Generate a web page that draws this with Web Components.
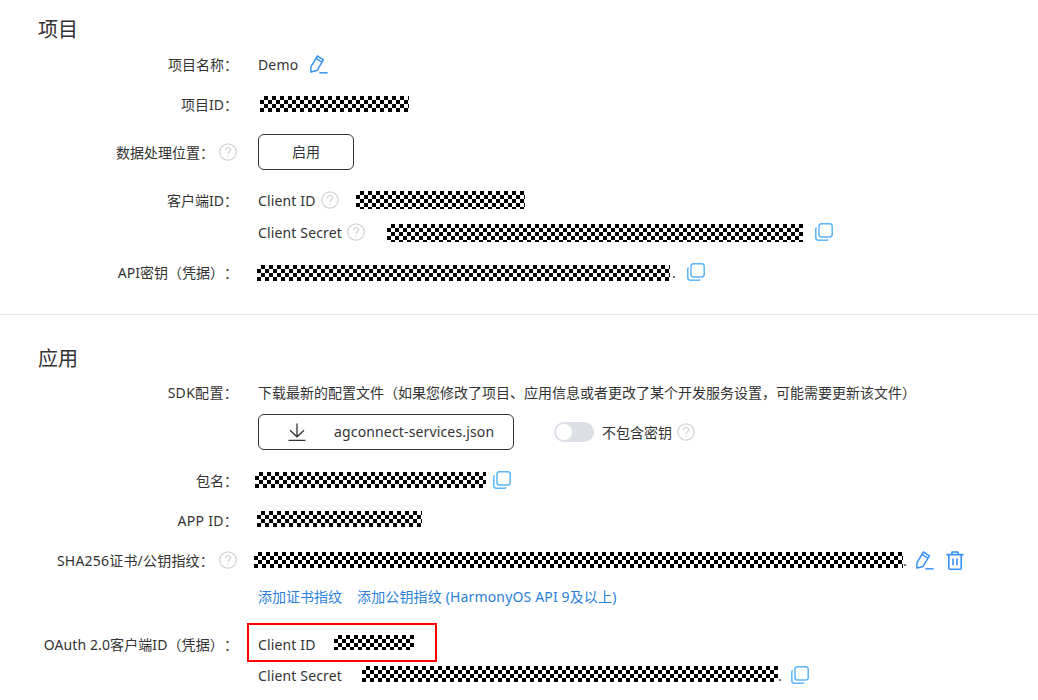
<!DOCTYPE html>
<html lang="zh">
<head>
<meta charset="utf-8">
<title>项目设置</title>
<style>
  html, body { margin: 0; height: 700px; overflow: hidden; background: #fff; }
  body { font: 14px/24px "Noto Sans", "Noto Sans CJK SC", sans-serif; color: #333; text-spacing-trim: space-all; }
</style>
</head>
<body>
<ag-section title="项目" style="--top:15px;--after:9px">
  <ag-row label="项目名称："><ag-text en>Demo</ag-text><ag-icon name="edit" ml="12"></ag-icon></ag-row>
  <ag-row label="项目ID："><ag-mask w="149" h="16" ml="2"></ag-mask></ag-row>
  <ag-row label="数据处理位置：" help tall><ag-button width="96">启用</ag-button></ag-row>
  <ag-row label="客户端ID：">
    <ag-stack>
      <ag-line><ag-text en>Client ID</ag-text><ag-icon name="help" ml="5"></ag-icon><ag-mask w="169" h="18" ml="17"></ag-mask></ag-line>
      <ag-line><ag-text en>Client Secret</ag-text><ag-icon name="help" ml="5"></ag-icon><ag-mask w="416" h="18" ml="22" mt="1"></ag-mask><ag-icon name="copy" ml="12"></ag-icon></ag-line>
    </ag-stack>
  </ag-row>
  <ag-row label="API密钥（凭据）："><ag-mask w="413" h="16" ml="-1" mt="2"></ag-mask><ag-text ml="2">.</ag-text><ag-icon name="copy" ml="11"></ag-icon></ag-row>
</ag-section>
<ag-section title="应用" divider style="--top:29px;--after:8px">
  <ag-row label="SDK配置：" ls=".3">
    <ag-stack>
      <ag-line><ag-text>下载最新的配置文件（如果您修改了项目、应用信息或者更改了某个开发服务设置，可能需要更新该文件）</ag-text></ag-line>
      <ag-line tall>
        <ag-button width="256" icon><ag-text en flat>agconnect-services.json</ag-text></ag-button>
        <ag-toggle></ag-toggle><ag-text ml="8">不包含密钥</ag-text><ag-icon name="help" ml="5"></ag-icon>
      </ag-line>
    </ag-stack>
  </ag-row>
  <ag-row label="包名："><ag-mask w="231" h="16" ml="-3"></ag-mask><ag-icon name="copy" ml="7"></ag-icon></ag-row>
  <ag-row label="APP ID：" ls=".3"><ag-mask w="165" h="16" ml="-1" mb="2"></ag-mask></ag-row>
  <ag-row label="SHA256证书/公钥指纹：" help ls=".2">
    <ag-stack style="--gap:12px;padding-bottom:8px">
      <ag-line><ag-mask w="649" h="16" ml="-4"></ag-mask><ag-text>.</ag-text><ag-icon name="edit" ml="9"></ag-icon><ag-icon name="trash" ml="12"></ag-icon></ag-line>
      <ag-line><ag-link>添加证书指纹</ag-link><ag-link ml="15" en>添加公钥指纹 (HarmonyOS API 9及以上)</ag-link></ag-line>
    </ag-stack>
  </ag-row>
  <ag-row label="OAuth 2.0客户端ID（凭据）：" ls=".1">
    <ag-stack style="--gap:7px">
      <ag-line><ag-text en>Client ID</ag-text><ag-mask w="80" h="15" ml="18" mb="3"></ag-mask><ag-redbox></ag-redbox></ag-line>
      <ag-line><ag-text en>Client Secret</ag-text><ag-mask w="416" h="16" ml="20" mb="2"></ag-mask><ag-text>.</ag-text><ag-icon name="copy" ml="9"></ag-icon></ag-line>
    </ag-stack>
  </ag-row>
</ag-section>

<script>
const ICONS = {
  edit: `<svg width="18" height="19" viewBox="0 0 18 19" fill="none" stroke="#3a92f6" stroke-width="1.5" stroke-linejoin="round">
      <path d="M.9 17V11.8L7.4 1l6 3.8L6.9 15.6z"/><path d="M5.9 3.4l6 3.8"/><path d="M9.4 17.8h8.2"/></svg>`,
  trash: `<svg width="18" height="19" viewBox="0 0 18 19" fill="none" stroke="#3a92f6" stroke-width="1.6" stroke-linejoin="round">
      <path d="M.4 3.6h17.2M6 3.4V1h6v2.4"/><path d="M2.8 3.8v13.4q0 1 1 1h10.4q1 0 1-1V3.8"/><path d="M7 7.6v6.6M11 7.6v6.6"/></svg>`,
  copy: `<svg width="18" height="18" viewBox="0 0 18 18" fill="none" stroke="#5cb6fa" stroke-width="1.5">
      <rect x="4" y=".8" width="13.2" height="13.2" rx="2.4"/><path d="M1.6 4.4Q.8 5 .8 6.2v8.4q0 2.6 2.6 2.6h7.8q1.4 0 2-.9"/></svg>`,
  help: `<svg width="18" height="18" viewBox="0 0 18 18" fill="none" stroke="#d3d3d3">
      <circle cx="9" cy="9" r="8.2" stroke-width="1.2"/><path d="M6.4 7.2c0-1.7 1.2-2.7 2.7-2.7s2.6 1 2.6 2.3c0 1.9-2.7 2-2.7 4.2" stroke-width="1.2"/><path d="M9 12.4v1.4" stroke-width="1.3"/></svg>`,
  download: `<svg width="18" height="18" viewBox="0 0 18 18" fill="none" stroke="#333" stroke-width="1.3">
      <path d="M9 .5v13M2 7.2l7 6.6 7-6.6M.5 17.4h17"/></svg>`
};

class AgSection extends HTMLElement {
  connectedCallback() {
    this.attachShadow({mode: "open"});
    this.shadowRoot.innerHTML = `
      <style>
        :host { display: block; padding: var(--top) 0 30px 38px; }
        :host([divider]) { border-top: 1px solid #e5e5e5; }
        h2 { margin: 0 0 var(--after); font: 400 20px/28px "Noto Sans CJK SC", "Noto Sans", sans-serif; color: #333; }
        .rows { display: flex; flex-direction: column; gap: 16px; margin-left: -38px; }
      </style>
      <h2>${this.getAttribute('title')}</h2>
      <div class="rows"><slot></slot></div>`;
  }
}

class AgRow extends HTMLElement {
  connectedCallback() {
    this.attachShadow({mode: "open"});
    const help = this.hasAttribute('help') ? ICONS.help : '';
    this.shadowRoot.innerHTML = `
      <style>
        :host { display: grid; grid-template-columns: 238px 1fr; column-gap: 20px; align-items: start; }
        .lab { display: flex; justify-content: flex-end; align-items: center; gap: 5px; height: 24px; white-space: nowrap; }
        .lab span { line-height: 22px; padding-top: 2px; letter-spacing: ${this.getAttribute('ls') || 0}px; }
        :host([help]) .lab { padding-right: 1px; }
        :host([tall]) .lab { height: 40px; }
        .val { display: flex; align-items: center; min-height: 24px; }
        :host([tall]) .val { min-height: 40px; }
      </style>
      <div class="lab"><span>${this.getAttribute('label')}</span>${help}</div>
      <div class="val"><slot></slot></div>`;
  }
}

class AgStack extends HTMLElement {
  constructor() {
    super();
    this.attachShadow({mode: "open"});
    this.shadowRoot.innerHTML = `
      <style>:host { display: flex; flex-direction: column; gap: var(--gap, 8px); }</style>
      <slot></slot>`;
  }
}

class AgLine extends HTMLElement {
  constructor() {
    super();
    this.attachShadow({mode: "open"});
    this.shadowRoot.innerHTML = `
      <style>
        :host { display: flex; align-items: center; min-height: 24px; position: relative; white-space: nowrap; }
        :host([tall]) { min-height: 40px; }
      </style>
      <slot></slot>`;
  }
}

class AgText extends HTMLElement {
  connectedCallback() {
    this.attachShadow({mode: "open"});
    this.shadowRoot.innerHTML = `
      <style>
        :host { display: block; flex: none; line-height: 22px; padding-top: 2px; margin-left: ${this.getAttribute('ml') || 0}px; }
        :host([en]) { letter-spacing: .15px; }
        :host([flat]) { padding-top: 0; line-height: 24px; }
      </style>
      <slot></slot>`;
  }
}

class AgMask extends HTMLElement {
  connectedCallback() {
    this.attachShadow({mode: "open"});
    const a = n => this.getAttribute(n) || 0;
    this.shadowRoot.innerHTML = `
      <style>
        :host {
          display: block; flex: none;
          width: ${a('w')}px; height: ${a('h')}px;
          margin: ${a('mt')}px 0 ${a('mb')}px ${a('ml')}px;
          background: repeating-conic-gradient(#000 0 25%, #fff 0 50%) 0 0 / 8px 8px;
        }
      </style>`;
  }
}

class AgIcon extends HTMLElement {
  connectedCallback() {
    this.attachShadow({mode: "open"});
    this.shadowRoot.innerHTML = `
      <style>
        :host { display: inline-flex; flex: none; margin-left: ${this.getAttribute('ml') || 0}px; }
      </style>
      ${ICONS[this.getAttribute('name')]}`;
  }
}

class AgButton extends HTMLElement {
  connectedCallback() {
    this.attachShadow({mode: "open"});
    const icon = this.hasAttribute('icon');
    this.shadowRoot.innerHTML = `
      <style>
        :host { display: inline-flex; flex: none; width: ${this.getAttribute('width')}px; height: 36px; box-sizing: border-box;
          align-items: center; justify-content: center; border: 1px solid #333; border-radius: 6px; background: #fff; color: #333; }
        :host([icon]) { justify-content: flex-start; padding-left: 29px; gap: 28px; }
      </style>
      ${icon ? ICONS.download : ''}<slot></slot>`;
  }
}

class AgToggle extends HTMLElement {
  constructor() {
    super();
    this.attachShadow({mode: "open"});
    this.shadowRoot.innerHTML = `
      <style>
        :host { display: block; flex: none; width: 40px; height: 20px; margin-left: 40px; border-radius: 10px; background: #dcdfe6; position: relative; }
        i { position: absolute; left: 2px; top: 2px; width: 16px; height: 16px; border-radius: 50%; background: #fff; }
      </style>
      <i></i>`;
  }
}

class AgLink extends HTMLElement {
  connectedCallback() {
    this.attachShadow({mode: "open"});
    this.shadowRoot.innerHTML = `
      <style>
        :host { display: block; color: #2a7fd9; line-height: 23px; padding-top: 1px; margin-left: ${this.getAttribute('ml') || 0}px; }
        :host([en]) { letter-spacing: .15px; }
      </style>
      <slot></slot>`;
  }
}

// red annotation frame drawn over the Client ID line
class AgRedbox extends HTMLElement {
  constructor() {
    super();
    this.attachShadow({mode: "open"});
    this.shadowRoot.innerHTML = `
      <style>
        :host { position: absolute; left: -11px; top: -9px; width: 190px; height: 39px; box-sizing: border-box; border: 2px solid #f00; }
      </style>`;
  }
}

customElements.define('ag-section', AgSection);
customElements.define('ag-row', AgRow);
customElements.define('ag-stack', AgStack);
customElements.define('ag-line', AgLine);
customElements.define('ag-text', AgText);
customElements.define('ag-mask', AgMask);
customElements.define('ag-icon', AgIcon);
customElements.define('ag-button', AgButton);
customElements.define('ag-toggle', AgToggle);
customElements.define('ag-link', AgLink);
customElements.define('ag-redbox', AgRedbox);
</script>
</body>
</html>
